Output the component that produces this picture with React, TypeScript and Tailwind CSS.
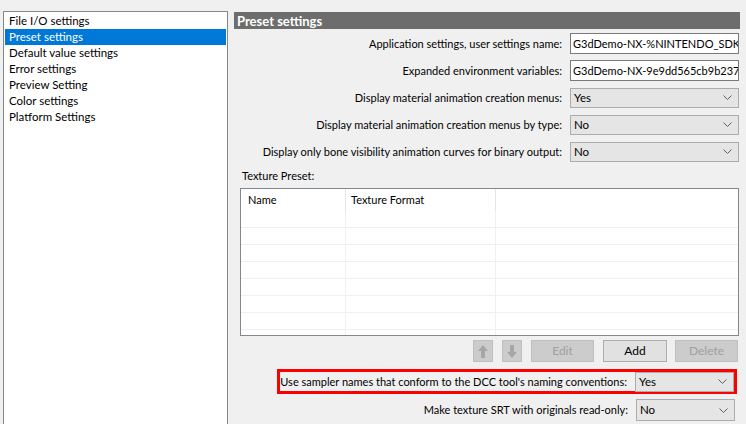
import { ReactNode } from 'react';

const navItems = [
  'File I/O settings',
  'Preset settings',
  'Default value settings',
  'Error settings',
  'Preview Setting',
  'Color settings',
  'Platform Settings',
];

const Chevron = () => (
  <svg width="9" height="5" viewBox="0 0 9 5" className="shrink-0">
    <path d="M0.5 0.5 L4.5 4.5 L8.5 0.5" fill="none" stroke="#606060" strokeWidth="1" />
  </svg>
);

const Arrow = ({ down }: { down?: boolean }) => (
  <svg width="10" height="13" viewBox="0 0 10 13" style={down ? { transform: 'rotate(180deg)' } : undefined}>
    <path d="M5 0 L10 6 L7 6 L7 13 L3 13 L3 6 L0 6 Z" fill="#a6a6a6" />
  </svg>
);

const TextField = ({ value }: { value: string }) => (
  <div className="w-[169px] h-[21px] shrink-0 border border-[#7a7a7a] bg-white pl-[2px] flex items-center overflow-hidden whitespace-nowrap text-[11px]">
    {value}
  </div>
);

const Dropdown = ({ value, width = 'w-[169px]', height = 'h-[20px]' }: { value: string; width?: string; height?: string }) => (
  <div className={`${width} ${height} shrink-0 border border-[#acacac] bg-[#e5e5e5] pl-[3px] pr-[6px] flex items-center justify-between text-[11.5px]`}>
    <span>{value}</span>
    <Chevron />
  </div>
);

const Row = ({ label, children }: { label: string; children: ReactNode }) => (
  <div className="h-[27px] flex items-center justify-end gap-[8px] pr-[1px]">
    <span className="whitespace-nowrap">{label}</span>
    {children}
  </div>
);

export default function App() {
  return (
    <div
      className="w-[746px] h-[424px] bg-[#f0f0f0] flex overflow-hidden text-[11px] text-black leading-[16px]"
      style={{ fontFamily: 'Lato, "Noto Sans", sans-serif' }}
    >
      {/* left navigation list */}
      <div className="w-[228px] shrink-0 pt-[11px] pl-[3px] text-[11.5px]">
        <div className="w-[225px] h-[430px] border border-[#828790] bg-white p-[1px]">
          {navItems.map((item, i) => (
            <div
              key={item}
              className={`h-[16px] pl-[4px] flex items-center whitespace-nowrap ${
                i === 1 ? 'bg-[#0078d7] text-white' : ''
              }`}
            >
              {item}
            </div>
          ))}
        </div>
      </div>

      {/* settings panel */}
      <div className="w-[518px] shrink-0 min-w-0 pt-[12px] pl-[6px] pr-[6px] flex flex-col">
        <div className="h-[17px] bg-[#6d6d6d] text-white text-[13px] font-bold px-[3px] flex items-center">Preset settings</div>

        <div className="mt-[1px]">
          <Row label="Application settings, user settings name:">
            <TextField value="G3dDemo-NX-%NINTENDO_SDK_F" />
          </Row>
          <Row label="Expanded environment variables:">
            <TextField value="G3dDemo-NX-9e9dd565cb9b2376" />
          </Row>
          <Row label="Display material animation creation menus:">
            <Dropdown value="Yes" />
          </Row>
          <Row label="Display material animation creation menus by type:">
            <Dropdown value="No" />
          </Row>
          <Row label="Display only bone visibility animation curves for binary output:">
            <Dropdown value="No" />
          </Row>
        </div>

        <div className="mt-[3px] pl-[8px]">Texture Preset:</div>

        <div className="mt-[4px] ml-[6px] w-[499px] h-[148px] border border-[#828790] bg-white overflow-hidden">
          <div className="h-[22px] flex">
            <div className="w-[105px] pl-[7px] pt-[3px] border-r border-[#e5e5e5]">Name</div>
            <div className="w-[150px] pl-[5px] pt-[3px] border-r border-[#e5e5e5]">Texture Format</div>
          </div>
          {Array.from({ length: 8 }).map((_, i) => (
            <div key={i} className="h-[17px] flex border-b border-[#f0f0f0]">
              <div className="w-[105px] border-r border-[#f0f0f0]" />
              <div className="w-[150px] border-r border-[#f0f0f0]" />
            </div>
          ))}
        </div>

        <div className="mt-[4px] flex justify-end pr-[2px] gap-[9px] text-[12px]">
          <div className="w-[20px] h-[22px] bg-[#cccccc] border border-[#bfbfbf] flex items-center justify-center">
            <Arrow />
          </div>
          <div className="w-[20px] h-[22px] bg-[#cccccc] border border-[#bfbfbf] flex items-center justify-center">
            <Arrow down />
          </div>
          <div className="w-[63px] h-[22px] bg-[#cccccc] border border-[#bfbfbf] text-[#a0a0a0] flex items-center justify-center">
            Edit
          </div>
          <div className="w-[64px] h-[22px] bg-[#e1e1e1] border border-[#adadad] flex items-center justify-center">
            Add
          </div>
          <div className="w-[63px] h-[22px] bg-[#cccccc] border border-[#bfbfbf] text-[#a0a0a0] flex items-center justify-center -ml-[1px]">
            Delete
          </div>
        </div>

        <div className="mt-[7px] ml-[43px] mr-[3px] h-[25px] border-[3px] border-[#ff0000] flex items-center justify-end gap-[8px]">
          <span className="whitespace-nowrap">Use sampler names that conform to the DCC tool's naming conventions:</span>
          <Dropdown value="Yes" width="w-[99px]" />
        </div>

        <div className="mt-[5px] flex items-center justify-end gap-[8px] pr-[5px]">
          <span className="whitespace-nowrap">Make texture SRT with originals read-only:</span>
          <Dropdown value="No" width="w-[99px]" height="h-[22px]" />
        </div>
      </div>
    </div>
  );
}
